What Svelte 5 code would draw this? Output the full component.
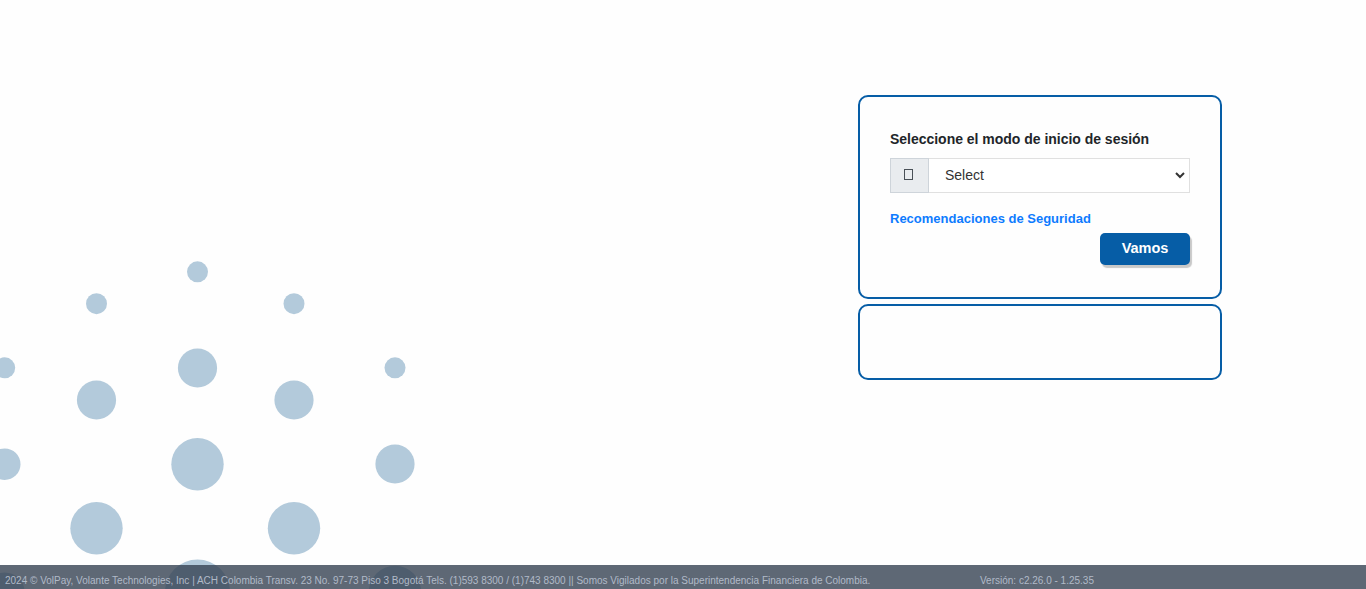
<script>
  let mode = $state('');
  const dots = [
    [197.5, 271.8, 10.5], [96.5, 303.7, 10.5], [294, 303.7, 10.5],
    [4.7, 367.8, 10.5], [395, 367.8, 10.5],
    [197.5, 368, 19.6], [96.5, 400, 19.6], [294, 400, 19.6],
    [395, 464, 19.6], [4.7, 464.2, 15.8],
    [197.5, 464.2, 26.2], [96.5, 528.2, 26.2], [294, 528.2, 26.2],
    [197.5, 592, 32.5], [395, 592, 26.2], [4.7, 592.5, 20]
  ];
</script>

<div class="page">
  <svg class="pattern" width="430" height="589" viewBox="0 0 430 589" aria-hidden="true">
    {#each dots as [cx, cy, r]}
      <circle {cx} {cy} {r} />
    {/each}
  </svg>

  <main>
    <section class="card login">
      <label for="mode">Seleccione el modo de inicio de sesión</label>
      <div class="group">
        <span class="addon">
          <svg width="9" height="11" viewBox="0 0 9 11"><rect x=".5" y=".5" width="8" height="10" /></svg>
        </span>
        <div class="field">
          <select id="mode" bind:value={mode}>
            <option value="">Select</option>
          </select>
        </div>
      </div>
      <a href="#seguridad">Recomendaciones de Seguridad</a>
      <button type="button">Vamos</button>
    </section>
    <section class="card extra"></section>
  </main>

  <footer>
    <span class="legal">2024 © VolPay, Volante Technologies, Inc | ACH Colombia Transv. 23 No. 97-73 Piso 3 Bogotá Tels. (1)593 8300 / (1)743 8300 || Somos Vigilados por la Superintendencia Financiera de Colombia.</span>
    <span class="version">Versión: c2.26.0 - 1.25.35</span>
  </footer>
</div>

<style>
  :global(body) { margin: 0; overflow: hidden; }
  .page {
    position: relative;
    display: flex;
    flex-direction: column;
    height: 589px;
    background: #fefefe;
    font-family: "Liberation Sans", Arial, sans-serif;
    overflow: hidden;
  }
  .page, .page * { box-sizing: border-box; }
  .pattern { position: absolute; left: 0; top: 0; }
  .pattern circle { fill: #b3cadb; }
  main {
    position: relative;
    flex: 1;
    display: flex;
    flex-direction: column;
    align-items: flex-end;
    gap: 5px;
    padding: 95px 144px 0 0;
  }
  .card {
    width: 364px;
    border: 2px solid #065da6;
    border-radius: 10px;
    background: #fefefe;
  }
  .login {
    display: flex;
    flex-direction: column;
    height: 204px;
    padding: 32px 30px 0;
  }
  .extra { height: 76px; }
  label {
    height: 29px;
    line-height: 20px;
    font-size: 14px;
    font-weight: 700;
    letter-spacing: -.02px;
    color: #212529;
    white-space: nowrap;
  }
  .group { display: flex; height: 35px; }
  .addon {
    display: flex;
    align-items: center;
    justify-content: center;
    width: 39px;
    padding: 0 2px 2px 0;
    background: #e9ecef;
    border: 1px solid #ced4da;
  }
  .addon rect { fill: none; stroke: #495057; }
  .field {
    display: flex;
    flex: 1;
    padding-right: 1px;
    border: 1px solid #e0e0e0;
    border-left: 0;
    background: #fff;
  }
  select {
    width: 100%;
    padding: 0 0 1px 12px;
    border: 0;
    background: transparent;
    font: 14px "Liberation Sans", Arial, sans-serif;
    color: #333;
    outline: 0;
  }
  a {
    margin-top: 16px;
    height: 24px;
    line-height: 20px;
    font-size: 13px;
    font-weight: 700;
    color: #0d7bff;
    text-decoration: none;
    white-space: nowrap;
  }
  button {
    align-self: flex-end;
    width: 90px;
    height: 32px;
    padding: 0 0 2px;
    border: 0;
    border-radius: 5px;
    background: #065da6;
    box-shadow: 2px 3px 1px #c8c8c8;
    color: #fff;
    font: 700 14.5px "Liberation Sans", Arial, sans-serif;
  }
  footer {
    position: relative;
    display: flex;
    height: 24px;
    padding: 4px 0 0 5px;
    background: rgba(51, 63, 80, .79);
    color: #b1bac8;
    font-size: 10px;
    line-height: 23px;
    white-space: nowrap;
  }
  .legal { width: 975px; }
</style>
